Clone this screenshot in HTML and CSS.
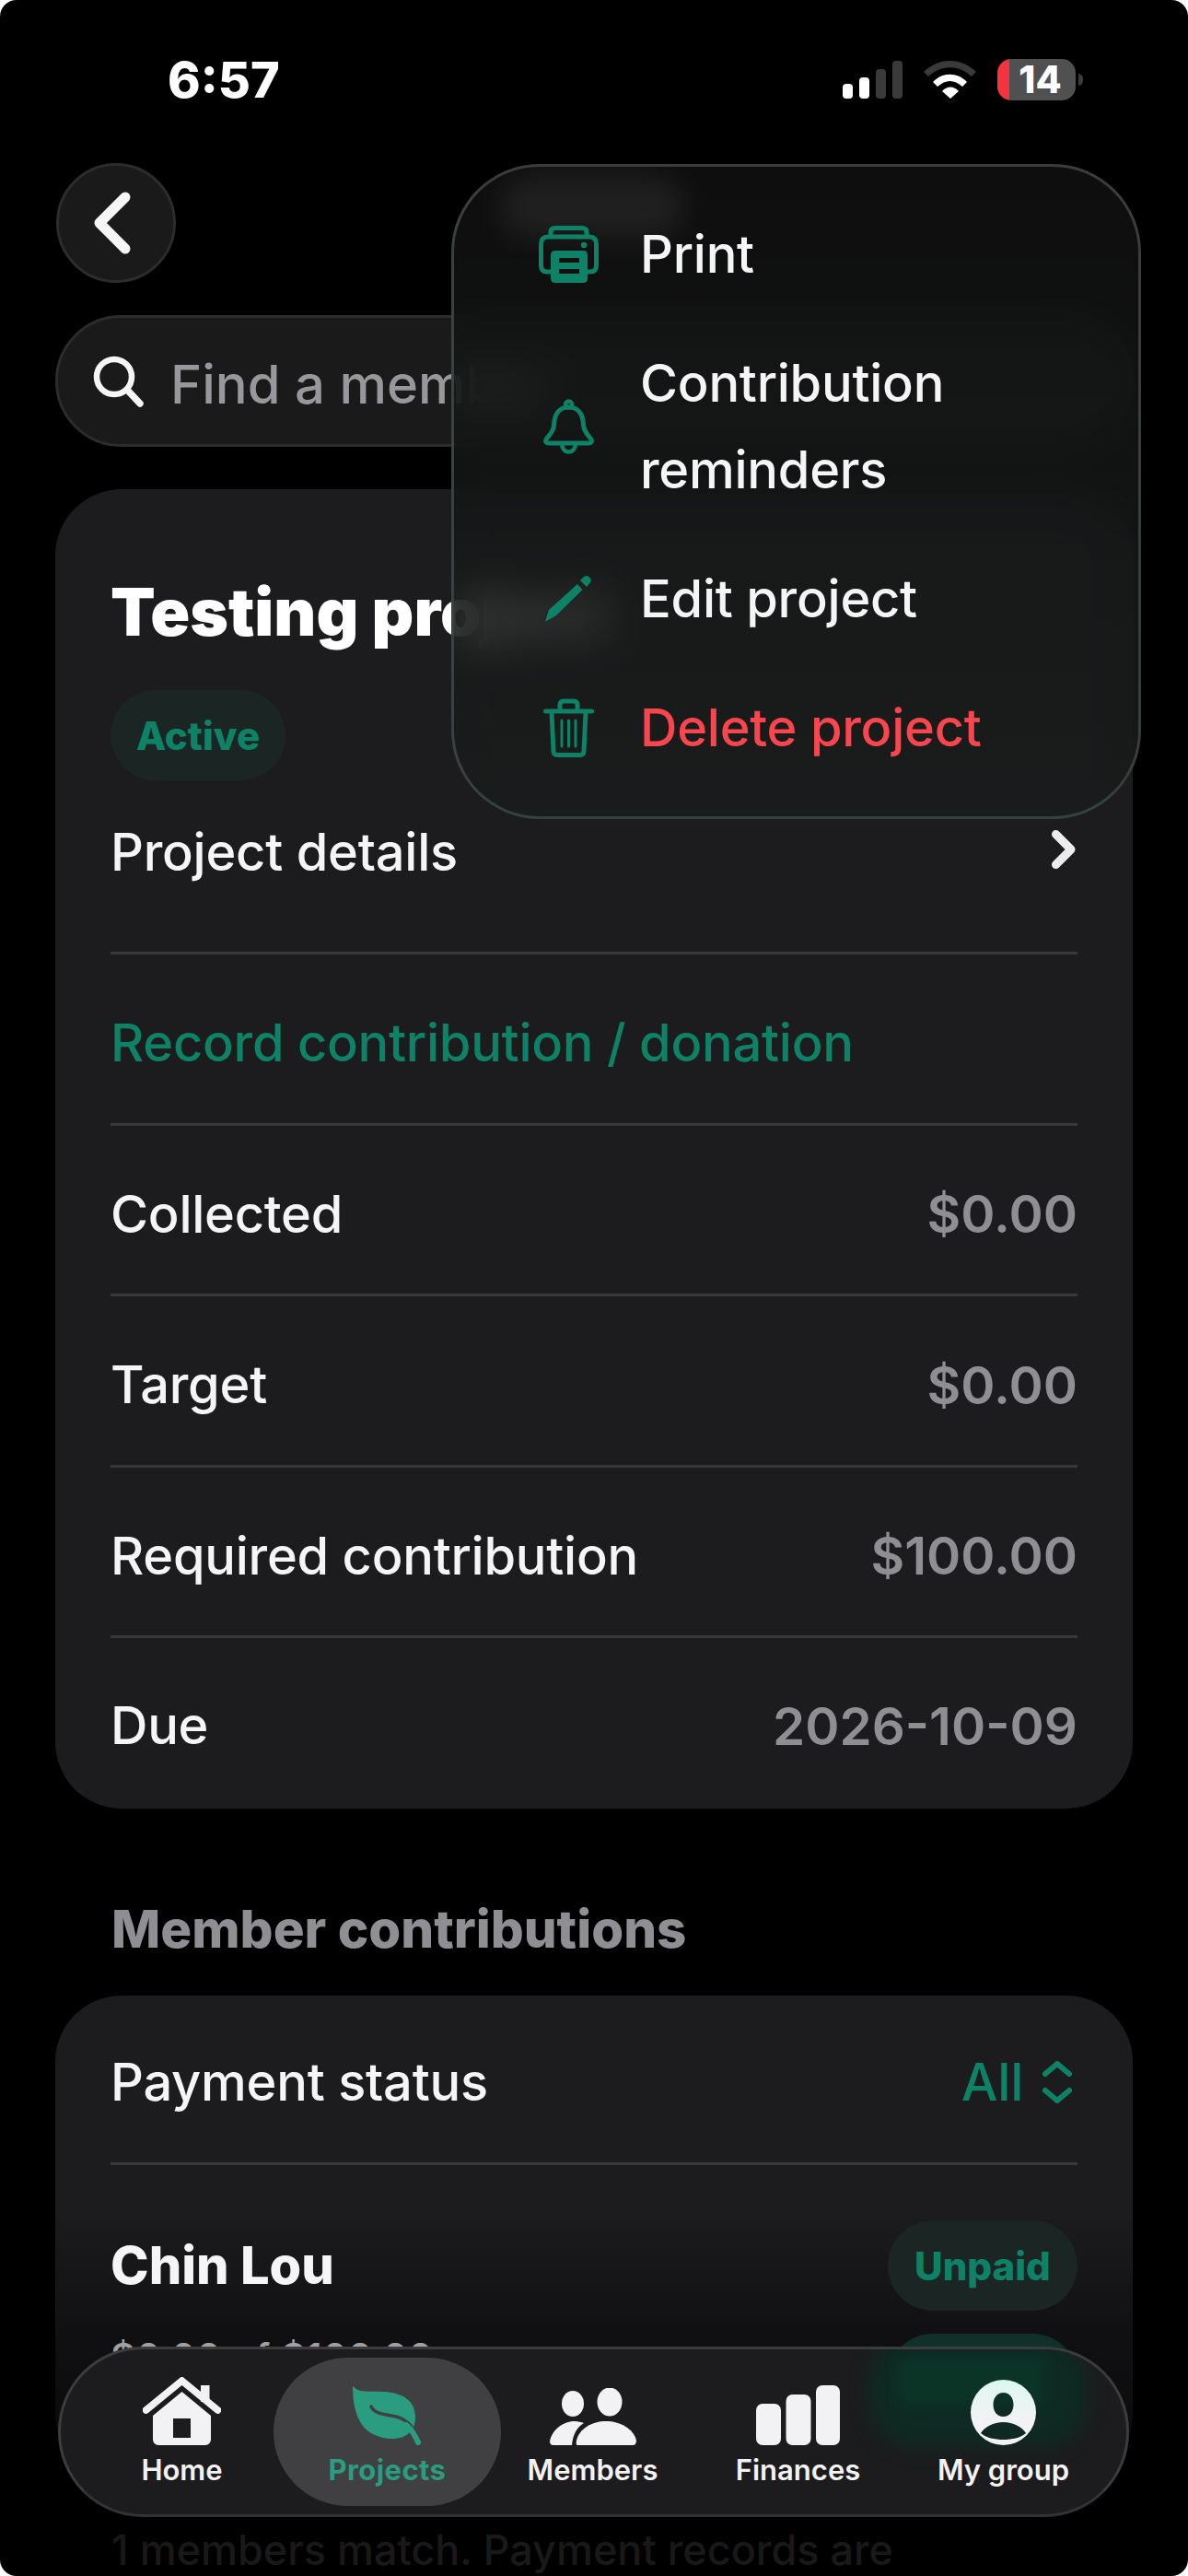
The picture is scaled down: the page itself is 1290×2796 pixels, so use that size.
FILE: index.html
```html
<!DOCTYPE html>
<html lang="en">
  <head>
    <meta charset="UTF-8" />
    <meta name="viewport" content="width=device-width, initial-scale=1.0" />
    <title>Testing project</title>
    <link rel="stylesheet" href="styles.css">
  </head>
  <body>
    <div class="screen">
      <!-- Status bar -->
      <div class="status-bar">
        <span class="time">6:57</span>
        <div class="status-icons">
          <svg class="signal" width="65" height="41" viewBox="0 0 65 41">
            <rect x="0" y="25" width="11" height="16" rx="4" fill="#fff" />
            <rect x="18" y="18" width="11" height="23" rx="4" fill="#fff" />
            <rect x="36" y="9" width="11" height="32" rx="4" fill="#3a3a3a" />
            <rect x="54" y="0" width="11" height="41" rx="4" fill="#3a3a3a" />
          </svg>
          <svg class="wifi" width="57" height="41" viewBox="0 0 57 41">
            <path d="M0 12C16-4 41-4 57 12L52 17C38 4 19 4 5 17Z" fill="#3a3a3a" />
            <path d="M10 23C20 12 37 12 47 23L42 28C33 20 24 20 15 28Z" fill="#fff" />
            <path d="M20 33C25 27 33 27 38 33L29 41Z" fill="#fff" />
          </svg>
          <div class="battery"><span>14</span></div>
        </div>
      </div>

      <!-- Back button -->
      <div class="top-row">
        <button class="back-btn">
          <svg width="41" height="68" viewBox="0 0 41 68">
            <path d="M35 6L7 34L35 62" fill="none" stroke="#f5f5f5" stroke-width="11" stroke-linecap="round" stroke-linejoin="round" />
          </svg>
        </button>
      </div>

      <!-- Member search -->
      <div class="search-box">
        <svg width="56" height="56" viewBox="0 0 56 56">
          <circle cx="23" cy="23" r="19" fill="none" stroke="#f5f5f5" stroke-width="6.5" />
          <path d="M37 37L51 52" stroke="#f5f5f5" stroke-width="7.5" stroke-linecap="round" />
        </svg>
        <span class="search-text">Find a member</span>
      </div>

      <!-- Project card -->
      <section class="card">
        <h1 class="project-title">Testing project</h1>
        <span class="pill pill-active">Active</span>
        <div class="row row-details">
          <span>Project details</span>
          <svg width="26" height="42" viewBox="0 0 26 42">
            <path d="M4.500 4.500L21 21L4.500 37.500" fill="none" stroke="#ececee" stroke-width="9" stroke-linecap="round" stroke-linejoin="round" />
          </svg>
        </div>
        <div class="row"><span class="green-text">Record contribution / donation</span></div>
        <div class="row"><span>Collected</span><span class="value">$0.00</span></div>
        <div class="row"><span>Target</span><span class="value">$0.00</span></div>
        <div class="row"><span>Required contribution</span><span class="value">$100.00</span></div>
        <div class="row row-last"><span>Due</span><span class="value">2026-10-09</span></div>
      </section>

      <h2 class="section-title">Member contributions</h2>

      <!-- Member contributions card -->
      <section class="card card-members">
        <div class="row row-status">
          <span>Payment status</span>
          <span class="status-filter">
            <span class="green-text">All</span>
            <svg width="32" height="46" viewBox="0 0 32 46">
              <path d="M3 14L16 3L29 14M3 32L16 43L29 32" fill="none" stroke="#0e8266" stroke-width="6" stroke-linecap="round" stroke-linejoin="round" />
            </svg>
          </span>
        </div>
        <div class="member-row">
          <strong class="member-name">Chin Lou</strong>
          <span class="pill pill-unpaid">Unpaid</span>
        </div>
        <div class="member-row member-row-second">
          <span class="member-amount">$0.00 of $100.00</span>
          <span class="pill pill-blank"></span>
        </div>
      </section>

      <p class="match-note">1 members match. Payment records are</p>

      <!-- Tab bar -->
      <nav class="tab-bar">
        <a class="tab">
          <svg width="85" height="74" viewBox="0 0 85 74">
            <path d="M3.500 36L42.500 4L81.500 36" fill="none" stroke="#f2f2f4" stroke-width="7.500" stroke-linecap="round" stroke-linejoin="miter" />
            <rect x="63" y="9" width="9.500" height="18" fill="#f2f2f4" />
            <path fill-rule="evenodd" fill="#f2f2f4" d="M42.500 16L74 42V68A6 6 0 0 1 68 74H17A6 6 0 0 1 11 68V42ZM33 45V66H52V45Z" />
          </svg>
          <span>Home</span>
        </a>
        <a class="tab tab-active">
          <svg width="76" height="64" viewBox="0 0 76 64">
            <path fill="#2a9d80" d="M0 0C8 8 18 5 34 6C52 7 68 14 68 34C68 40 66 46 62 50C52 60 34 58 22 52C6 44 0 24 0 0Z" />
            <path d="M20 22C24 31 36 30 47 33C55 35 60 39 64 44" fill="none" stroke="#404042" stroke-width="3.500" stroke-linecap="round" />
            <path d="M58 42C65 48 68 54 71 61" fill="none" stroke="#2a9d80" stroke-width="6" stroke-linecap="round" />
          </svg>
          <span>Projects</span>
        </a>
        <a class="tab">
          <svg width="94" height="62" viewBox="0 0 94 62">
            <ellipse cx="25" cy="17" rx="12" ry="14" fill="#f2f2f4" />
            <ellipse cx="65" cy="15" rx="13.500" ry="15.500" fill="#f2f2f4" />
            <path fill="#f2f2f4" d="M0 58C2 46 14 36 27 36C31 36 34 37 37 38C30 42 25 50 24 62H4Q0 62 0 58Z" />
            <path fill="#f2f2f4" d="M30 62Q28 62 29 57C32 44 46 36 61 36C76 36 91 44 94 57Q94 62 90 62Z" />
          </svg>
          <span>Members</span>
        </a>
        <a class="tab">
          <svg width="91" height="65" viewBox="0 0 91 65">
            <rect x="0" y="20" width="27" height="45" rx="7" fill="#f2f2f4" />
            <rect x="32.500" y="10" width="27" height="55" rx="7" fill="#f2f2f4" />
            <rect x="65" y="0" width="26" height="65" rx="7" fill="#f2f2f4" />
          </svg>
          <span>Finances</span>
        </a>
        <a class="tab">
          <svg width="71" height="71" viewBox="0 0 71 71">
            <defs>
              <linearGradient id="group-fill" x1="0" y1="0" x2="0" y2="1">
                <stop offset="0" stop-color="#dcf8ef" />
                <stop offset="0.6" stop-color="#f2f2f4" />
              </linearGradient>
            </defs>
            <path fill="url(#group-fill)" fill-rule="evenodd" d="M35.500 0A35.500 35.500 0 1 1 35.500 71A35.500 35.500 0 1 1 35.500 0ZM35.500 14C28.500 14 24.500 20 24.500 27C24.500 34 28.500 40 35.500 40C42.500 40 46.500 34 46.500 27C46.500 20 42.500 14 35.500 14ZM35.500 46C25 46 15 51 11 58C17 63 26 65 35.500 65C45 65 54 63 60 58C56 51 46 46 35.500 46Z" />
          </svg>
          <span>My group</span>
        </a>
      </nav>

      <!-- Actions menu -->
      <div class="menu">
        <div class="menu-item">
          <span class="menu-icon">
            <svg width="65" height="62" viewBox="0 0 65 62">
              <path d="M13 11V7Q13 2.500 18 2.500H47Q52 2.500 52 7V11" fill="none" stroke="#0e8266" stroke-width="5" />
              <path d="M13 50H9Q2.500 50 2.500 43V20Q2.500 12 10 12H55Q62.500 12 62.500 20V43Q62.500 50 56 50H53" fill="none" stroke="#0e8266" stroke-width="5" />
              <circle cx="49" cy="21" r="3.200" fill="#0e8266" />
              <path fill-rule="evenodd" fill="#0e8266" d="M18 27H48Q53 27 53 32V57Q53 62 48 62H18Q13 62 13 57V32Q13 27 18 27ZM22 35V40H44V35ZM22 47V52H44V47Z" />
            </svg>
          </span>
          <span>Print</span>
        </div>
        <div class="menu-item">
          <span class="menu-icon">
            <svg width="55" height="60" viewBox="0 0 55 60">
              <circle cx="27.500" cy="6" r="3.500" fill="none" stroke="#0e8266" stroke-width="4.500" />
              <path d="M27.500 9C17 9 12 17 11.500 28C11 37 5 40 3 44Q1.500 48 6 48H49Q53.500 48 52 44C50 40 44 37 43.500 28C43 17 38 9 27.500 9Z" fill="none" stroke="#0e8266" stroke-width="5" stroke-linejoin="round" />
              <path d="M20 49A7.500 8.500 0 0 0 35 49" fill="none" stroke="#0e8266" stroke-width="4.500" />
            </svg>
          </span>
          <span>Contribution<br />reminders</span>
        </div>
        <div class="menu-item">
          <span class="menu-icon">
            <svg width="50" height="50" viewBox="0 0 50 50">
              <path fill="#0e8266" d="M0 50L4 37L35 9L40.500 15L12 43Z" />
              <path fill="#0e8266" d="M38 5L42 1Q45-1 48 1.500Q51 4.500 49 7L45 12Z" />
            </svg>
          </span>
          <span>Edit project</span>
        </div>
        <div class="menu-item">
          <span class="menu-icon">
            <svg width="55" height="64" viewBox="0 0 55 64">
              <path d="M2.500 14H52.500" stroke="#0e8266" stroke-width="5" stroke-linecap="round" />
              <path d="M18 12V7Q18 3 22 3H33Q37 3 37 7V12" fill="none" stroke="#0e8266" stroke-width="5" />
              <path d="M9 15L11 57Q11 61.500 15 61.500H40Q44 61.500 44 57L46 15" fill="none" stroke="#0e8266" stroke-width="5" />
              <path d="M20 24V52M27.500 24V52M35 24V52" stroke="#0e8266" stroke-width="3" stroke-linecap="round" />
            </svg>
          </span>
          <span class="danger-text">Delete project</span>
        </div>
      </div>
    </div>
  </body>
</html>
```

FILE: styles.css
```css
/* Page */
body {
  margin: 0;
  background-color: #fff;
  font-family: "Inter", "Liberation Sans", sans-serif;
  color: #f5f5f7;
}

.screen {
  position: relative;
  width: 1290px;
  height: 2796px;
  overflow: hidden;
  background-color: #000;
  border-radius: 18px;
}

/* Status bar */
.status-bar {
  display: flex;
  align-items: center;
  justify-content: space-between;
  height: 177px;
  padding: 0 122px 0 182px;
  box-sizing: border-box;
}

.time {
  font-size: 54px;
  font-weight: 800;
  color: #fff;
  padding-bottom: 5px;
}

.status-icons {
  display: flex;
  align-items: center;
  padding-bottom: 5px;
}

.wifi {
  margin-left: 23px;
}

.battery {
  position: relative;
  width: 85px;
  height: 45px;
  margin-left: 23px;
  border-radius: 15px;
  background: linear-gradient(to right, #f5333f 13px, #505050 13px);
  text-align: center;
  font-size: 41px;
  line-height: 45px;
  font-weight: 800;
  color: #fff;
}

.battery span {
  padding-left: 8px;
}

.battery::after {
  content: "";
  position: absolute;
  top: 16px;
  right: -8px;
  width: 5px;
  height: 13px;
  border-radius: 0 5px 5px 0;
  background-color: #3a3a3a;
}

/* Back button */
.top-row {
  padding: 0 61px;
}

.back-btn {
  display: flex;
  align-items: center;
  justify-content: center;
  width: 130px;
  height: 130px;
  padding: 0 9px 0 0;
  background-color: #1a1a1a;
  border: 3px solid #2c2c2c;
  border-radius: 50%;
}

/* Search */
.search-box {
  display: flex;
  align-items: center;
  gap: 28px;
  height: 143px;
  margin: 35px 60px 0;
  padding: 0 38px;
  box-sizing: border-box;
  background-color: #1a1a1a;
  border: 3px solid #2c2c2c;
  border-radius: 72px;
  font-size: 58px;
  font-weight: 550;
  color: #98989c;
}

.search-text {
  padding-top: 6px;
}

/* Cards */
.card {
  margin: 46px 60px 0;
  padding: 93px 60px 0;
  height: 1432px;
  box-sizing: border-box;
  background-color: #1c1c1e;
  border-radius: 72px;
}

.project-title {
  margin: 0;
  font-size: 71px;
  line-height: 80px;
  font-weight: 900;
  color: #fff;
}

.pill {
  display: flex;
  align-items: center;
  justify-content: center;
  height: 98px;
  border-radius: 49px;
  background-color: #1b2624;
  color: #0e8266;
  font-size: 42px;
  font-weight: 800;
}

.pill-active {
  width: 190px;
  margin-top: 45px;
}

.row {
  display: flex;
  align-items: center;
  justify-content: space-between;
  height: 185.500px;
  padding-top: 10px;
  box-sizing: border-box;
  border-bottom: 3px solid #38383b;
  font-size: 56px;
  font-weight: 550;
  letter-spacing: -0.250px;
}

.row-details {
  height: 189px;
  padding-top: 0;
  padding-bottom: 30px;
  padding-right: 2px;
}

.row-details svg {
  margin-bottom: 6px;
}

.row-last {
  padding-top: 5px;
  border-bottom: none;
}

.value {
  font-size: 56.500px;
  font-weight: 580;
  letter-spacing: 0;
  color: #8e8e93;
}

.green-text {
  color: #0e8266;
}

.danger-text {
  color: #f9464e;
}

.section-title {
  margin: 0;
  padding: 98px 121px 0;
  font-size: 56.500px;
  line-height: 66px;
  font-weight: 800;
  color: #8e8e93;
}

/* Members card */
.card-members {
  margin-top: 39px;
  padding-top: 0;
  height: auto;
  padding-bottom: 60px;
  background: linear-gradient(to bottom, #1c1c1e 232px, #101012 372px, #0a0a0a 100%);
}

.row-status {
  height: 184px;
  padding-top: 6px;
}

.status-filter {
  display: flex;
  align-items: center;
  gap: 21px;
  padding-right: 6px;
}

.member-row {
  display: flex;
  align-items: center;
  justify-content: space-between;
  padding-top: 60px;
}

.member-row-second {
  align-items: flex-start;
  padding-top: 25px;
}

.member-name {
  font-size: 56px;
  font-weight: 800;
  color: #f5f5f7;
}

.member-amount {
  font-size: 42.500px;
  font-weight: 500;
  color: #a0a0a4;
}

.pill-unpaid,
.pill-blank {
  width: 206px;
}

.pill-blank {
  background-color: #12302a;
}

.match-note {
  margin: 0;
  padding: 49px 121px 0;
  font-size: 45px;
  line-height: 55px;
  font-weight: 500;
  color: #19191a;
}

/* Tab bar */
.tab-bar {
  position: absolute;
  left: 63px;
  top: 2547px;
  display: flex;
  align-items: stretch;
  width: 1163px;
  height: 185px;
  padding: 9px 0 9px 20px;
  box-sizing: border-box;
  overflow: hidden;
  background-color: #1c1c1e;
  border: 3px solid #3c3c3e;
  border-bottom-color: #333;
  border-radius: 92px;
}

/* Unpaid pill showing through the glass */
.tab-bar::before {
  content: "";
  position: absolute;
  left: 878px;
  top: -14px;
  width: 236px;
  height: 120px;
  border-radius: 50px;
  background-color: #0e2a23;
  filter: blur(10px);
}

.tab-bar::after {
  content: "";
  position: absolute;
  left: 909px;
  top: 10px;
  width: 160px;
  height: 50px;
  background-color: #0b3427;
  filter: blur(6px);
}

.tab {
  position: relative;
  z-index: 1;
  flex: 0 0 223px;
  display: flex;
  flex-direction: column;
  align-items: center;
  justify-content: flex-end;
  gap: 8px;
  padding-bottom: 21px;
  box-sizing: border-box;
  font-size: 31px;
  font-weight: 600;
  color: #f2f2f4;
}

.tab-active {
  font-weight: 700;
  letter-spacing: 0.400px;
  color: #2a9d80;
}

.tab-active::before {
  content: "";
  position: absolute;
  z-index: -1;
  top: 0;
  bottom: 0;
  left: -12px;
  right: -12px;
  background-color: #404042;
  border-radius: 81px;
}

/* Actions menu */
.menu {
  position: absolute;
  left: 490px;
  top: 178px;
  width: 749px;
  padding: 25px 0 26px 88px;
  box-sizing: border-box;
  overflow: hidden;
  background: linear-gradient(to bottom, rgba(17, 17, 17, 0.82), rgba(26, 28, 28, 0.82));
  -webkit-backdrop-filter: blur(24px);
  backdrop-filter: blur(24px);
  border: 3px solid #3a3d3c;
  border-left-color: #3a4240;
  border-bottom-color: #33423e;
  border-radius: 96px;
}

.menu::before {
  content: "";
  position: absolute;
  left: 50px;
  top: 8px;
  width: 200px;
  height: 70px;
  border-radius: 30px;
  background-color: rgba(255, 255, 255, 0.07);
  filter: blur(16px);
}

.menu-item {
  position: relative;
  display: flex;
  align-items: center;
  gap: 42px;
  padding: 23px 0;
  font-size: 56px;
  line-height: 94px;
  font-weight: 550;
  letter-spacing: -0.250px;
  color: #f5f5f7;
}

.menu-icon {
  flex: 0 0 72px;
  display: flex;
  justify-content: center;
}
```
